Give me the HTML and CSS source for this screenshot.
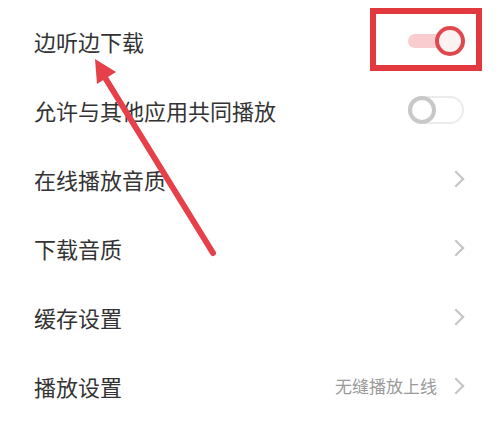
FILE: index.html
```html
<!DOCTYPE html>
<html>
<head>
  <link rel="stylesheet" href="styles.css">
</head>
<body>
  <div class="settings">
    <div class="row">
      <span class="label">边听边下载</span>
      <span class="switch on"><i class="knob"></i></span>
    </div>
    <div class="row">
      <span class="label">允许与其他应用共同播放</span>
      <span class="switch"><i class="knob"></i></span>
    </div>
    <div class="row">
      <span class="label">在线播放音质</span>
      <span class="more"><i class="chevron"></i></span>
    </div>
    <div class="row">
      <span class="label">下载音质</span>
      <span class="more"><i class="chevron"></i></span>
    </div>
    <div class="row">
      <span class="label">缓存设置</span>
      <span class="more"><i class="chevron"></i></span>
    </div>
    <div class="row">
      <span class="label">播放设置</span>
      <span class="more"><span class="hint">无缝播放上线</span><i class="chevron"></i></span>
    </div>
  </div>

  <!-- 标注 -->
  <div class="mark-box"></div>
  <svg class="mark-arrow" width="500" height="437" viewBox="0 0 500 437">
    <line x1="213" y1="253" x2="104" y2="76" stroke="#e6414a" stroke-width="6" stroke-linecap="round"/>
    <polygon points="95,59 116,72 97,84" fill="#e6414a"/>
  </svg>
</body>
</html>
```

FILE: styles.css
```css
* {
  margin: 0;
  padding: 0;
  box-sizing: border-box;
}
body {
  width: 500px;
  height: 437px;
  background: #fff;
  position: relative;
  overflow: hidden;
  font-family: "Noto Sans CJK SC", "Noto Sans", sans-serif;
}
.settings {
  padding: 6px 0 0 34px;
}
.row {
  height: 69px;
  display: flex;
  align-items: center;
  justify-content: space-between;
  padding-right: 34px;
}
.label {
  font-size: 22px;
  color: #333;
}
.switch {
  position: relative;
  width: 56px;
  height: 28px;
  border: 2px solid #ececec;
  border-radius: 14px;
  margin-right: 2px;
}
.switch .knob {
  position: absolute;
  left: -2px;
  top: -2px;
  width: 28px;
  height: 28px;
  border: 4px solid #c8c8c8;
  border-radius: 50%;
  background: #fff;
}
.switch.on {
  border: 0;
  height: 14px;
  width: 54px;
  background: #f9cdcf;
  margin-right: 4px;
}
.switch.on .knob {
  left: auto;
  right: -3px;
  top: -8px;
  width: 30px;
  height: 30px;
  border-color: #e0484f;
  background: #fdf2f2;
}
.more {
  display: flex;
  align-items: center;
  gap: 13px;
}
.hint {
  font-size: 17px;
  color: #9a9a9a;
}
.chevron {
  display: block;
  width: 12px;
  height: 12px;
  border-top: 2px solid #c4c4c4;
  border-right: 2px solid #c4c4c4;
  transform: rotate(45deg);
  margin-right: 4px;
}
.mark-box {
  position: absolute;
  left: 370px;
  top: 8px;
  width: 112px;
  height: 63px;
  border: 6px solid #e2393f;
}
.mark-arrow {
  position: absolute;
  left: 0;
  top: 0;
}
```
